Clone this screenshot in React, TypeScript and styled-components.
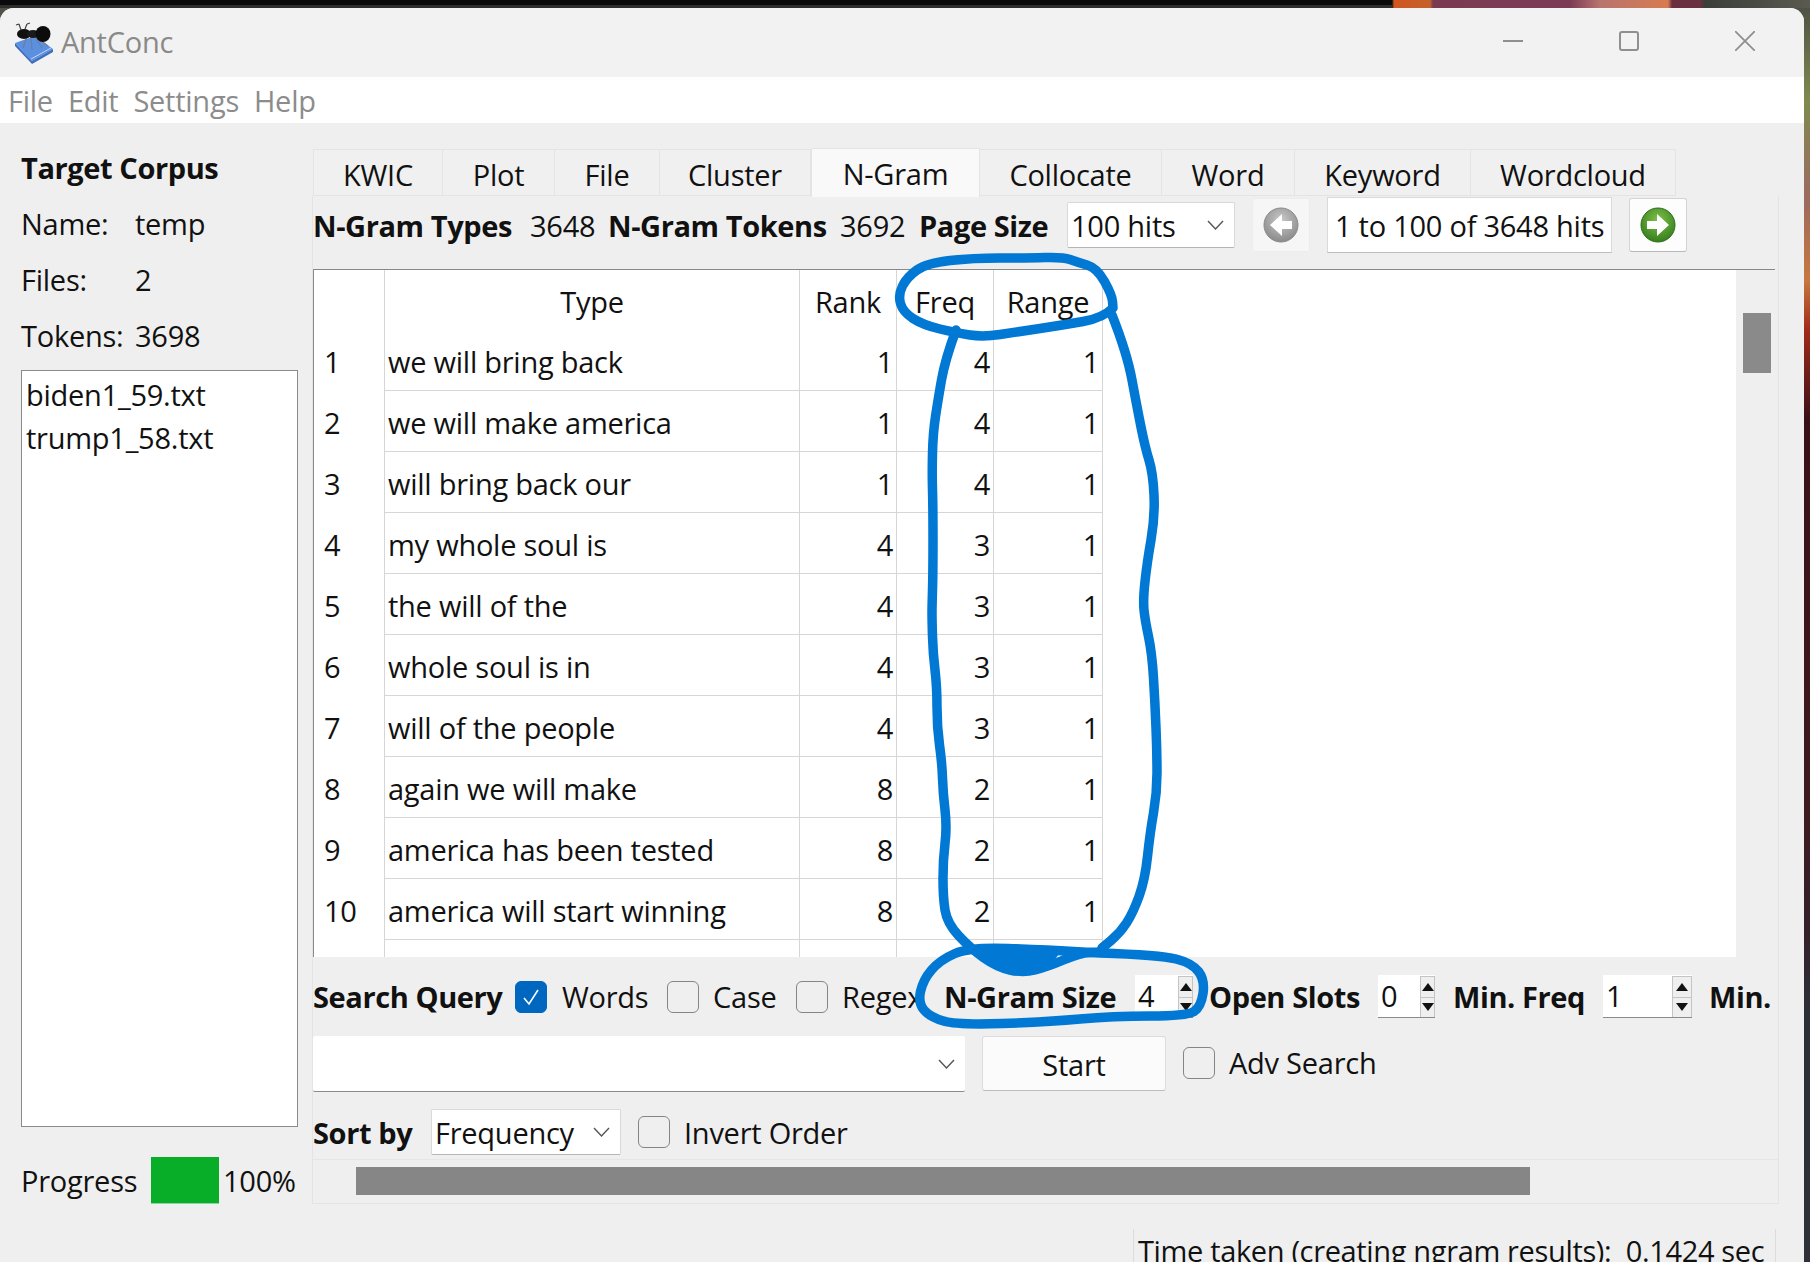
import React from 'react';
import styled, {createGlobalStyle} from 'styled-components';

const FONT = `"Open Sans", "Noto Sans", "Liberation Sans", sans-serif`;

const GlobalStyle = createGlobalStyle`
  html, body {
    margin: 0;
    padding: 0;
    background: #2e3238;
  }
  body {
    font-family: ${FONT};
    font-size: 29px;
    letter-spacing: -0.25px;
    color: #111;
    overflow: hidden;
  }
`;

const Page = styled.div`
  position: relative;
  width: 1810px;
  height: 1262px;
  box-sizing: border-box;
  padding: 8px 6px 0 0;
  overflow: hidden;
  background:
    linear-gradient(#2e2e2e, #2e2e2e) 0 5px / 1393px 3px no-repeat,
    linear-gradient(90deg, #0a0a0a 0, #0a0a0a 1392px, #d2551f 1394px, #c4622c 1430px, #7a3a52 1433px, #7c3b55 1570px, #b8746e 1600px, #d77b50 1668px, #6b3040 1672px, #6b3040 1700px, #3a3f38 1705px, #5a5a50 1810px) top left / 100% 8px no-repeat,
    linear-gradient(180deg, #4a4d45 0, #7f8a50 100px, #9c6a60 200px, #c8783e 280px, #a02a1a 330px, #3a1018 420px, #3e1a1e 800px, #35202a 930px, #2c3036 1010px, #2e3238 1262px);
`;

const Window = styled.div`
  width: 1804px;
  height: 1254px;
  display: flex;
  flex-direction: column;
  background: #efefef;
  border-radius: 14px 14px 0 0;
  overflow: hidden;
`;

const TitleBar = styled.div`
  flex: 0 0 69px;
  display: flex;
  align-items: center;
  padding-left: 12px;
  background: #f2f2f2;
`;

const AppName = styled.span`
  margin: -2px 0 0 1px;
  color: #8a8a8a;
`;

const WindowButtons = styled.div`
  margin-left: auto;
  display: flex;
  align-items: center;
  margin-right: 49px;
  margin-top: -3px;
  gap: 96px;
  color: #8f8f8f;
`;

const MenuBar = styled.div`
  flex: 0 0 46px;
  display: flex;
  align-items: center;
  gap: 15px;
  padding-left: 8px;
  background: #fff;
  color: #8c8c8c;
`;

const Body = styled.div`
  flex: 1;
  display: flex;
  min-height: 0;
`;

const Sidebar = styled.aside`
  flex: 0 0 312px;
  box-sizing: border-box;
  padding: 16px 0 0 21px;
`;

const SideRow = styled.div<{$bold?: boolean}>`
  height: 56px;
  display: flex;
  align-items: center;
  font-weight: ${p => (p.$bold ? 700 : 400)};
  letter-spacing: ${p => (p.$bold ? '-0.4px' : 'inherit')};
`;

const SideKey = styled.span`
  width: 114px;
`;

const FileList = styled.div`
  box-sizing: border-box;
  width: 277px;
  height: 757px;
  margin-top: 7px;
  padding: 2px 0 0 4px;
  background: #fff;
  border: 1px solid #8a8a8a;
  line-height: 43px;
`;

const ProgressRow = styled.div`
  display: flex;
  align-items: center;
  height: 47px;
  margin-top: 30px;
`;

const ProgressKey = styled.span`
  width: 130px;
`;

const ProgressBox = styled.div`
  width: 68px;
  height: 47px;
  margin-right: 4px;
  background: #08ae27;
  border-bottom: 1px solid #8fd39b;
  box-sizing: border-box;
`;

const Main = styled.main`
  flex: 1;
  display: flex;
  flex-direction: column;
  padding-top: 25px;
  min-width: 0;
`;

const Tabs = styled.div`
  display: flex;
  flex: 0 0 47px;
  align-items: flex-end;
  padding-left: 1px;
`;

const Tab = styled.div<{$w: number; $active?: boolean}>`
  width: ${p => p.$w}px;
  height: ${p => (p.$active ? 49 : 47)}px;
  box-sizing: border-box;
  display: flex;
  align-items: center;
  justify-content: center;
  background: ${p => (p.$active ? '#f9f9f9' : '#f0f0f0')};
  border: 1px solid #e4e4e4;
  border-left-width: ${p => (p.$active ? 1 : 0)}px;
  border-bottom-width: ${p => (p.$active ? 0 : 1)}px;
  margin-bottom: ${p => (p.$active ? -1 : 0)}px;
  padding-top: ${p => (p.$active ? 0 : 4)}px;
  position: relative;
  z-index: ${p => (p.$active ? 1 : 0)};
  &:first-child {
    border-left-width: 1px;
  }
`;

const Panel = styled.section`
  box-sizing: border-box;
  width: 1467px;
  flex: 0 0 1008px;
  border: 1px solid #e4e4e4;
  border-top: 0;
  display: flex;
  flex-direction: column;
`;

const InfoBar = styled.div`
  flex: 0 0 73px;
  min-height: 0;
  box-sizing: border-box;
  padding-top: 1px;
  display: grid;
  grid-template-columns: 217px 78px 232px 79px 148px 168px 75px 302px 75px;
  grid-template-rows: 56px;
  align-items: center;
`;

const Bold = styled.span`
  font-weight: 700;
  letter-spacing: -0.4px;
  white-space: nowrap;
`;

const Plain = styled.span`
  white-space: nowrap;
`;

const ComboBox = styled.div<{$w: number; $h: number; $flat?: boolean}>`
  width: ${p => p.$w}px;
  height: ${p => p.$h}px;
  box-sizing: border-box;
  display: flex;
  align-items: center;
  justify-content: space-between;
  padding: 0 10px 0 3px;
  justify-self: start;
  background: #fff;
  border: ${p => (p.$flat ? '0' : '1px solid #d9d9d9')};
  border-bottom: 1px solid ${p => (p.$flat ? '#8a8a8a' : '#b5b5b5')};
  border-radius: 2px;
`;

const IconButton = styled.div<{$enabled?: boolean}>`
  justify-self: end;
  width: 58px;
  height: 54px;
  box-sizing: border-box;
  display: flex;
  align-items: center;
  justify-content: center;
  background: ${p => (p.$enabled ? '#fdfdfd' : '#f6f6f6')};
  border: 1px solid ${p => (p.$enabled ? '#d4d4d4' : '#ececec')};
  border-bottom-color: ${p => (p.$enabled ? '#b8b8b8' : '#ececec')};
  border-radius: 3px;
`;

const PageField = styled.div`
  justify-self: end;
  width: 285px;
  height: 56px;
  box-sizing: border-box;
  display: flex;
  align-items: center;
  padding-left: 7px;
  background: #fff;
  border: 1px solid #d9d9d9;
  border-bottom-color: #bdbdbd;
  white-space: nowrap;
`;

const TableArea = styled.div`
  flex: 0 0 688px;
  display: flex;
  box-sizing: border-box;
  border-top: 1px solid #888;
  margin-right: 3px;
`;

const TableView = styled.div`
  width: 1422px;
  height: 687px;
  overflow: hidden;
  background: #fff;
  border-left: 1px solid #8a8a8a;
`;

const ScrollTrack = styled.div`
  flex: 1;
  padding: 43px 0 0 7px;
`;

const ScrollThumb = styled.div`
  width: 28px;
  height: 60px;
  background: #8a8a8a;
`;

const Grid = styled.table`
  width: 789px;
  table-layout: fixed;
  border-collapse: separate;
  border-spacing: 0;
`;

const HeadCell = styled.th<{$w: number}>`
  width: ${p => p.$w}px;
  height: 60px;
  box-sizing: border-box;
  padding: 2px 0 0;
  font-weight: 400;
  text-align: center;
  border-right: 1px solid #d6d6d6;
`;

const IndexCell = styled.td`
  height: 61px;
  box-sizing: border-box;
  padding: 2px 0 0 10px;
  border-right: 1px solid #d6d6d6;
`;

const TextCell = styled.td`
  box-sizing: border-box;
  padding: 2px 0 0 3px;
  border-right: 1px solid #d6d6d6;
  border-bottom: 1px solid #d6d6d6;
  white-space: nowrap;
  overflow: hidden;
`;

const NumCell = styled(TextCell)`
  padding: 2px 3px 0 0;
  text-align: right;
`;

const SearchBar = styled.div`
  flex: 0 0 79px;
  display: grid;
  grid-template-columns: 202px 47px 105px 46px 83px 46px 102px 191px 74px 169px 75px 150px 106px 70px;
  align-items: center;
`;

const Check = styled.div<{$on?: boolean}>`
  width: 32px;
  height: 32px;
  box-sizing: border-box;
  display: flex;
  align-items: center;
  justify-content: center;
  border-radius: 6px;
  background: ${p => (p.$on ? '#0067c0' : 'transparent')};
  border: 1.5px solid ${p => (p.$on ? '#0067c0' : '#858585')};
`;

const Spin = styled.div<{$w: number}>`
  width: ${p => p.$w}px;
  height: 43px;
  box-sizing: border-box;
  display: flex;
  justify-content: space-between;
  padding-left: 3px;
  background: #fff;
  border-bottom: 1px solid #8a8a8a;
  line-height: 42px;
`;

const SpinButtons = styled.div<{$w: number}>`
  width: ${p => p.$w}px;
  display: flex;
  flex-direction: column;
  box-sizing: border-box;
  background: #efefef;
  border: 1px solid #c4c4c4;
  border-bottom: 0;
  margin-top: 1px;
`;

const SpinButton = styled.div<{$down?: boolean}>`
  flex: 1;
  display: flex;
  align-items: center;
  justify-content: center;
  border-top: ${p => (p.$down ? '1px solid #c4c4c4' : '0')};
  &::after {
    content: '';
    border-left: 6px solid transparent;
    border-right: 6px solid transparent;
    ${p => (p.$down ? 'border-top: 8px solid #111;' : 'border-bottom: 8px solid #111;')}
  }
`;

const QueryRow = styled.div`
  flex: 0 0 56px;
  display: flex;
  align-items: flex-start;
`;

const StartButton = styled.div`
  width: 184px;
  height: 55px;
  margin: 0 17px;
  box-sizing: border-box;
  display: flex;
  align-items: center;
  justify-content: center;
  padding-top: 2px;
  background: #fbfbfb;
  border: 1px solid #dcdcdc;
  border-bottom-color: #bcbcbc;
  border-radius: 3px;
`;

const CheckOption = styled.div<{$h?: number}>`
  display: flex;
  align-items: center;
  gap: 14px;
  height: ${p => p.$h ?? 46}px;
`;

const SortRow = styled.div`
  flex: 0 0 67px;
  display: flex;
  align-items: center;
  gap: 17px;
  padding-top: 13px;
  box-sizing: border-box;
`;

const SortLabel = styled(Bold)`
  width: 101px;
`;

const BarRow = styled.div`
  flex: 1;
  padding: 7px 0 0 43px;
  border-top: 1px solid #e6e6e6;
`;

const Bar = styled.div`
  width: 1174px;
  height: 28px;
  background: #868686;
`;

const StatusRow = styled.div`
  flex: 0 0 auto;
  padding-left: 821px;
  margin-top: 25px;
`;

const StatusBox = styled.div`
  width: 643px;
  box-sizing: border-box;
  height: 40px;
  padding: 2px 0 0 4px;
  border-left: 1px solid #dcdcdc;
  border-right: 1px solid #dcdcdc;
  letter-spacing: -0.35px;
  white-space: nowrap;
`;

const Scribble = styled.svg`
  position: absolute;
  left: 0;
  top: 0;
  pointer-events: none;
`;

const tabs = [
    {label: 'KWIC', w: 130},
    {label: 'Plot', w: 112},
    {label: 'File', w: 105},
    {label: 'Cluster', w: 151},
    {label: 'N-Gram', w: 169, active: true},
    {label: 'Collocate', w: 182},
    {label: 'Word', w: 133},
    {label: 'Keyword', w: 176},
    {label: 'Wordcloud', w: 205}
];

const rows: [string, number, number, number][] = [
    ['we will bring back', 1, 4, 1],
    ['we will make america', 1, 4, 1],
    ['will bring back our', 1, 4, 1],
    ['my whole soul is', 4, 3, 1],
    ['the will of the', 4, 3, 1],
    ['whole soul is in', 4, 3, 1],
    ['will of the people', 4, 3, 1],
    ['again we will make', 8, 2, 1],
    ['america has been tested', 8, 2, 1],
    ['america will start winning', 8, 2, 1]
];

type Pt = [number, number];

// hand drawn strokes, midpoints smoothed
const smooth = (pts: Pt[]): string => {
    let d = `M${pts[0][0]} ${pts[0][1]}`;
    for (let i = 1; i < pts.length - 1; i++) {
        const mx = (pts[i][0] + pts[i + 1][0]) / 2;
        const my = (pts[i][1] + pts[i + 1][1]) / 2;
        d += ` Q${pts[i][0]} ${pts[i][1]} ${mx} ${my}`;
    }
    const last = pts[pts.length - 1];
    return `${d} L${last[0]} ${last[1]}`;
};

const headerLoop: Pt[] = [
    [1113, 308], [1103, 318], [1063, 325], [1017, 332], [983, 337], [957, 333], [923, 325], [903, 312],
    [898, 295], [907, 277], [927, 263], [973, 258], [1027, 258], [1063, 257], [1077, 262], [1097, 268],
    [1112, 295], [1113, 308]
];

const leftSide: Pt[] = [
    [956, 330], [945, 360], [938, 400], [933, 433], [932, 473], [933, 507], [933, 573], [932, 607], [932, 620],
    [933, 653], [937, 687], [937, 727], [942, 763], [943, 793], [947, 827], [943, 860], [943, 897], [947, 923],
    [970, 948], [997, 967], [1023, 973], [1047, 967], [1080, 953], [1100, 952]
];

const rightSide: Pt[] = [
    [1112, 315], [1127, 353], [1137, 407], [1145, 447], [1153, 473], [1155, 517], [1147, 563], [1143, 600],
    [1145, 620], [1152, 653], [1155, 703], [1157, 753], [1157, 793], [1150, 833], [1145, 880], [1133, 913],
    [1120, 933], [1102, 948]
];

const sizeLoop: Pt[] = [
    [1100, 953], [1160, 955], [1192, 963], [1205, 980], [1201, 1007], [1187, 1016], [1113, 1016], [1047, 1022],
    [957, 1025], [930, 1017], [918, 1003], [923, 980], [940, 960], [970, 947], [1047, 950], [1100, 953]
];

const Chevron = () => (
    <svg width="17" height="10" viewBox="0 0 17 10">
        <path d="M1 1l7.5 8L16 1" fill="none" stroke="#555" strokeWidth="1.4" />
    </svg>
);

const Tick = () => (
    <svg width="18" height="18" viewBox="0 0 18 18">
        <path d="M2 10l5 6L16 2" fill="none" stroke="#fff" strokeWidth="1.6" />
    </svg>
);

const Arrow = ({left, id, from, to, edge}: {left?: boolean; id: string; from: string; to: string; edge: string}) => (
    <svg width="36" height="36" viewBox="0 0 36 36" style={{transform: left ? 'scaleX(-1)' : undefined}}>
        <defs>
            <radialGradient id={id} cx="50%" cy="35%" r="70%">
                <stop offset="0%" stopColor={from} />
                <stop offset="100%" stopColor={to} />
            </radialGradient>
        </defs>
        <circle cx="18" cy="18" r="17" fill={`url(#${id})`} stroke={edge} strokeWidth="1" />
        <path d="M7 14h10V7l12 11-12 11v-7H7z" fill="#fff" />
    </svg>
);

const Logo = () => (
    <svg width="48" height="48" viewBox="0 0 48 48">
        <path d="M3 24L23 17l18 13L20 42z" fill="#5b8fe0" />
        <path d="M3 24l17 18 21-12v3L20 45 3 27z" fill="#3f6fc0" />
        <path d="M19 40l20-11" stroke="#c5d8f5" strokeWidth="1" />
        <path d="M15 17l-4 12M19 18l1 13M23 18l7 11M27 20l9 7" fill="none" stroke="#6f7f9a" strokeWidth="1.2" />
        <ellipse cx="12" cy="15" rx="7" ry="5" fill="#111" />
        <ellipse cx="21" cy="15" rx="6" ry="4" fill="#1a1a1a" />
        <ellipse cx="31" cy="15" rx="7.5" ry="8" fill="#0c0c0c" />
        <path d="M9 11L7 5M13 10l2-5M7 5L4 6M15 5l3-1" fill="none" stroke="#444" strokeWidth="1.2" />
    </svg>
);

const SpinBox = ({value, w, button = 15}: {value: number; w: number; button?: number}) => (
    <Spin $w={w}>
        {value}
        <SpinButtons $w={button}>
            <SpinButton />
            <SpinButton $down />
        </SpinButtons>
    </Spin>
);

const App = () => (
    <Page>
        <GlobalStyle />
        <Window>
            <TitleBar>
                <Logo />
                <AppName>AntConc</AppName>
                <WindowButtons>
                    <svg width="20" height="20" viewBox="0 0 20 20">
                        <path d="M0 10h20" stroke="currentColor" strokeWidth="2" />
                    </svg>
                    <svg width="20" height="20" viewBox="0 0 20 20">
                        <rect x="1" y="1" width="18" height="18" rx="2" fill="none" stroke="currentColor" strokeWidth="2" />
                    </svg>
                    <svg width="20" height="20" viewBox="0 0 20 20">
                        <path d="M0 0l20 20M20 0L0 20" stroke="currentColor" strokeWidth="1.8" />
                    </svg>
                </WindowButtons>
            </TitleBar>
            <MenuBar>
                <span>File</span>
                <span>Edit</span>
                <span>Settings</span>
                <span>Help</span>
            </MenuBar>
            <Body>
                <Sidebar>
                    <SideRow $bold>Target Corpus</SideRow>
                    <SideRow><SideKey>Name:</SideKey>temp</SideRow>
                    <SideRow><SideKey>Files:</SideKey>2</SideRow>
                    <SideRow><SideKey>Tokens:</SideKey>3698</SideRow>
                    <FileList>
                        <div>biden1_59.txt</div>
                        <div>trump1_58.txt</div>
                    </FileList>
                    <ProgressRow>
                        <ProgressKey>Progress</ProgressKey>
                        <ProgressBox />
                        100%
                    </ProgressRow>
                </Sidebar>
                <Main>
                    <Tabs>
                        {tabs.map(t => (
                            <Tab key={t.label} $w={t.w} $active={t.active}>{t.label}</Tab>
                        ))}
                    </Tabs>
                    <Panel>
                        <InfoBar>
                            <Bold>N-Gram Types</Bold>
                            <Plain>3648</Plain>
                            <Bold>N-Gram Tokens</Bold>
                            <Plain>3692</Plain>
                            <Bold>Page Size</Bold>
                            <ComboBox $w={168} $h={46}>100 hits<Chevron /></ComboBox>
                            <IconButton>
                                <Arrow left id="arrowGrey" from="#c9c9c9" to="#858585" edge="#8a8a8a" />
                            </IconButton>
                            <PageField>1 to 100 of 3648 hits</PageField>
                            <IconButton $enabled>
                                <Arrow id="arrowGreen" from="#7fc04a" to="#2f7a18" edge="#2d6d18" />
                            </IconButton>
                        </InfoBar>
                        <TableArea>
                            <TableView>
                                <Grid>
                                    <thead>
                                        <tr>
                                            <HeadCell $w={71} />
                                            <HeadCell $w={415}>Type</HeadCell>
                                            <HeadCell $w={97}>Rank</HeadCell>
                                            <HeadCell $w={97}>Freq</HeadCell>
                                            <HeadCell $w={109}>Range</HeadCell>
                                        </tr>
                                    </thead>
                                    <tbody>
                                        {rows.map((r, i) => (
                                            <tr key={r[0]}>
                                                <IndexCell>{i + 1}</IndexCell>
                                                <TextCell>{r[0]}</TextCell>
                                                <NumCell>{r[1]}</NumCell>
                                                <NumCell>{r[2]}</NumCell>
                                                <NumCell>{r[3]}</NumCell>
                                            </tr>
                                        ))}
                                        <tr>
                                            <IndexCell />
                                            <TextCell />
                                            <NumCell />
                                            <NumCell />
                                            <NumCell />
                                        </tr>
                                    </tbody>
                                </Grid>
                            </TableView>
                            <ScrollTrack>
                                <ScrollThumb />
                            </ScrollTrack>
                        </TableArea>
                        <SearchBar>
                            <Bold>Search Query</Bold>
                            <Check $on><Tick /></Check>
                            <Plain>Words</Plain>
                            <Check />
                            <Plain>Case</Plain>
                            <Check />
                            <Plain>Regex</Plain>
                            <Bold>N-Gram Size</Bold>
                            <SpinBox value={4} w={58} />
                            <Bold>Open Slots</Bold>
                            <SpinBox value={0} w={57} />
                            <Bold>Min. Freq</Bold>
                            <SpinBox value={1} w={89} button={20} />
                            <Bold>Min.</Bold>
                        </SearchBar>
                        <QueryRow>
                            <ComboBox $w={652} $h={56} $flat><span /><Chevron /></ComboBox>
                            <StartButton>Start</StartButton>
                            <CheckOption $h={53}>
                                <Check />
                                <Plain>Adv Search</Plain>
                            </CheckOption>
                        </QueryRow>
                        <SortRow>
                            <SortLabel>Sort by</SortLabel>
                            <ComboBox $w={190} $h={46}>Frequency<Chevron /></ComboBox>
                            <CheckOption>
                                <Check />
                                <Plain>Invert Order</Plain>
                            </CheckOption>
                        </SortRow>
                        <BarRow>
                            <Bar />
                        </BarRow>
                    </Panel>
                    <StatusRow>
                        <StatusBox>Time taken (creating ngram results):&nbsp; 0.1424 sec</StatusBox>
                    </StatusRow>
                </Main>
            </Body>
        </Window>
        <Scribble width="1810" height="1262" viewBox="0 0 1810 1262">
            <g fill="none" stroke="#0078d4" strokeWidth="9.5" strokeLinecap="round" strokeLinejoin="round">
                <path d={smooth(headerLoop)} />
                <path d={smooth(leftSide)} />
                <path d={smooth(rightSide)} />
                <path d={smooth(sizeLoop)} />
            </g>
            <path d="M968 946L1000 968L1024 974L1050 966L1062 950z" fill="#0078d4" />
        </Scribble>
    </Page>
);

export default App;
